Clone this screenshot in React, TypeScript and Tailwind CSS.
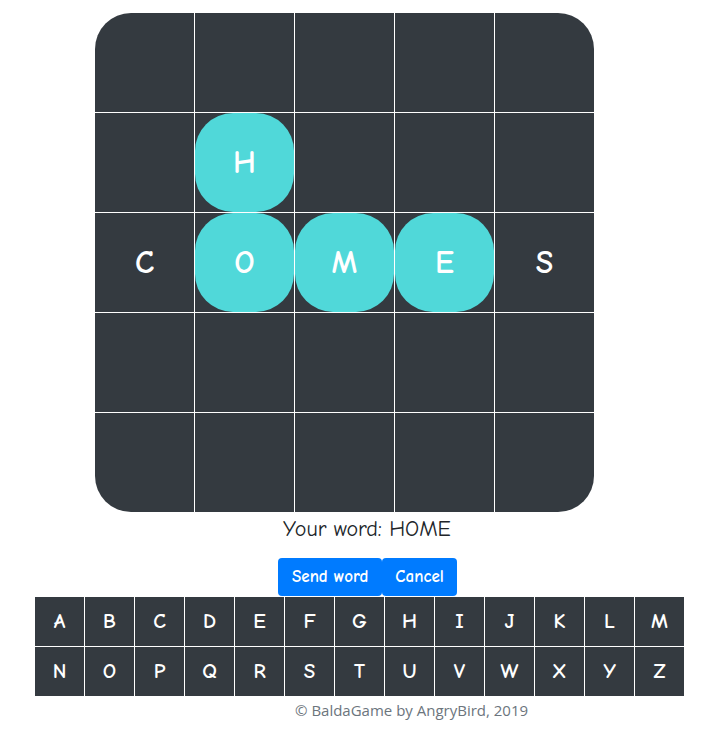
import React from "react";

const grid: string[][] = [
  ["", "", "", "", ""],
  ["", "H", "", "", ""],
  ["C", "O", "M", "E", "S"],
  ["", "", "", "", ""],
  ["", "", "", "", ""],
];
const selected = new Set(["1-1", "2-1", "2-2", "2-3"]);
const row1 = "ABCDEFGHIJKLM".split("");
const row2 = "NOPQRSTUVWXYZ".split("");

const comic = { fontFamily: '"Comic Sans MS", "Comic Neue", cursive' };

export default function App() {
  return (
    <div className="w-[720px] h-[745px] bg-white relative">
      <div className="pt-[13px] pl-[95px]">
        <div className="w-[499px] h-[499px] bg-white rounded-[36px] overflow-hidden grid grid-cols-[repeat(5,99px)] grid-rows-[repeat(5,99px)] gap-px">
          {grid.flatMap((row, r) =>
            row.map((ch, c) => {
              const sel = selected.has(`${r}-${c}`);
              return (
                <div key={`${r}-${c}`} className="bg-[#343a40] w-full h-full">
                  <div
                    className={`w-full h-full flex items-center justify-center text-white text-[32px] font-bold ${sel ? "bg-[#50d8d9] rounded-[38px]" : ""}`}
                    style={comic}
                  >
                    {ch}
                  </div>
                </div>
              );
            })
          )}
        </div>
      </div>
      <div className="pl-[283px] pt-[2px] h-[46px]">
        <div className="text-[22px] leading-[30px] text-[#212529]" style={comic}>
          Your word: HOME
        </div>
      </div>
      <div className="pl-[278px] flex">
        <button className="h-[38px] px-[14px] bg-[#007bff] text-white text-[17px] font-bold rounded-[4px]" style={comic}>
          Send word
        </button>
        <button className="h-[38px] px-[13px] bg-[#007bff] text-white text-[17px] font-bold rounded-[4px]" style={comic}>
          Cancel
        </button>
      </div>
      <div className="pl-[35px] pt-px">
        <div className="w-[649px] grid grid-cols-[repeat(13,49px)] gap-px bg-white">
          {[...row1, ...row2].map((l) => (
            <div key={l} className="h-[49px] bg-[#343a40] text-white text-[21px] font-bold flex items-center justify-center" style={comic}>
              {l}
            </div>
          ))}
        </div>
      </div>
      <div className="pl-[295px] pt-[3px] text-[15px] text-[#6c757d]" style={{ fontFamily: '"Open Sans", "Noto Sans", sans-serif' }}>
        © BaldaGame by AngryBird, 2019
      </div>
    </div>
  );
}
